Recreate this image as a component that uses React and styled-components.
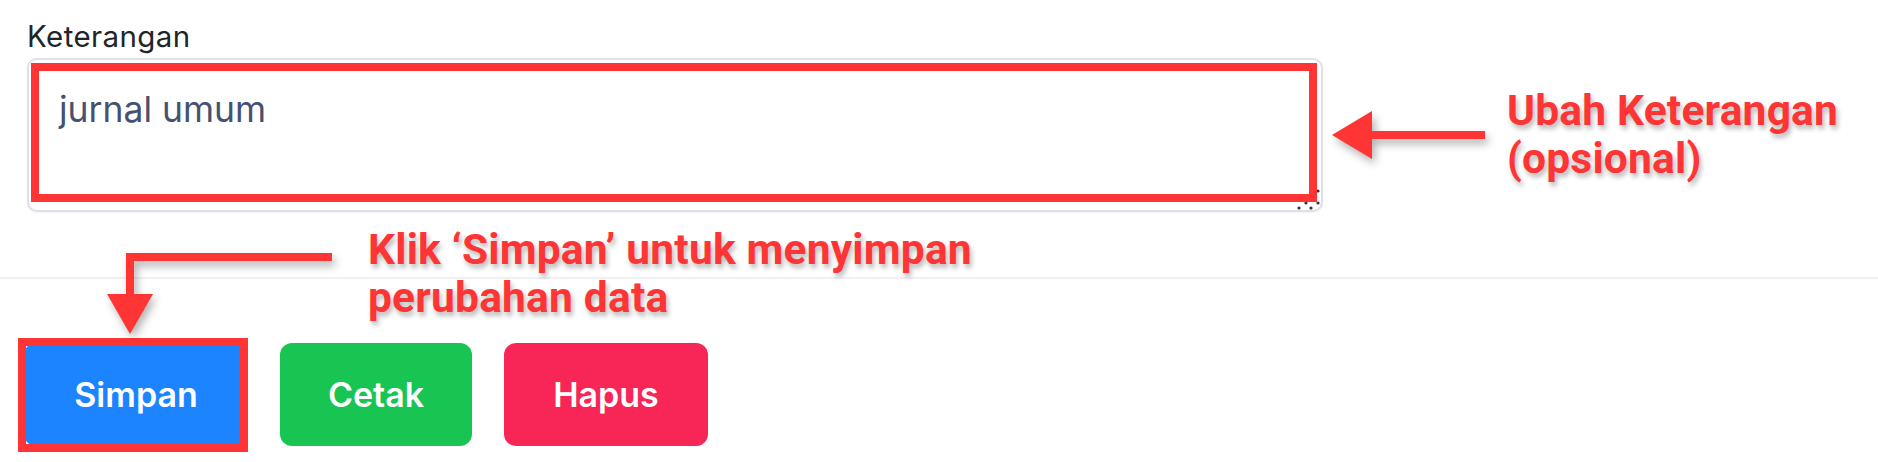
import React from "react";
import styled, { createGlobalStyle } from "styled-components";

const RED = "#ff3535";

const GlobalStyle = createGlobalStyle`
  html, body {
    margin: 0;
    padding: 0;
    background: #fff;
  }
  body {
    font-family: Inter, "Noto Sans", sans-serif;
  }
`;

const Page = styled.div`
  position: relative;
  width: 1878px;
  height: 462px;
  overflow: hidden;
  background: #fff;
`;

const FormSection = styled.section`
  padding: 19px 0 65px 27px;
  border-bottom: 2px solid #f1f1f3;
`;

const Label = styled.label`
  display: block;
  font-size: 29.5px;
  line-height: 34px;
  letter-spacing: 0.4px;
  color: #212429;
`;

const FieldRow = styled.div`
  display: flex;
  align-items: center;
  margin-top: 5px;
`;

const TextBox = styled.div`
  position: relative;
  width: 1296px;
  height: 154px;
  flex: none;
`;

const TextArea = styled.textarea`
  display: block;
  width: 100%;
  height: 100%;
  box-sizing: border-box;
  margin: 0;
  padding: 23px 30px;
  border: 2px solid #dde1ea;
  border-radius: 10px;
  box-shadow: 0 1px 2px rgba(30, 40, 70, 0.06);
  font-family: Inter, "Noto Sans", sans-serif;
  font-size: 35.5px;
  line-height: 1.5;
  color: #465170;
  resize: none;
  outline: none;
  background: #fff;
`;

const Grip = styled.svg`
  position: absolute;
  right: 0;
  bottom: 0;
`;

// red annotation frame drawn over a control
const Highlight = styled.span`
  position: absolute;
  inset: ${(p) => p.$inset};
  border: 8px solid ${RED};
  pointer-events: none;
`;

const SideNote = styled.div`
  display: flex;
  align-items: center;
  gap: 22px;
  margin-left: 9px;
`;

const NoteText = styled.div`
  font-family: Roboto, "Liberation Sans", sans-serif;
  font-weight: 700;
  font-size: 42.5px;
  line-height: 48px;
  letter-spacing: 0.2px;
  color: ${RED};
  white-space: nowrap;
  text-shadow: 2px 4px 5px rgba(0, 0, 0, 0.28);
`;

const ArrowSvg = styled.svg`
  display: block;
  flex: none;
  filter: drop-shadow(3px 5px 4px rgba(0, 0, 0, 0.3));
`;

const ActionBar = styled.div`
  display: flex;
  gap: 32px;
  padding: 64px 0 0 24px;
`;

const Slot = styled.div`
  position: relative;
`;

const Button = styled.button`
  display: flex;
  align-items: center;
  justify-content: center;
  width: ${(p) => p.$w}px;
  height: 103px;
  border: none;
  border-radius: 12px;
  background: ${(p) => p.$bg};
  color: #fff;
  font-family: Inter, "Noto Sans", sans-serif;
  font-weight: 600;
  font-size: 34px;
  padding: 0;
`;

const SaveNote = styled.div`
  position: absolute;
  top: 226px;
  left: 106px;
  display: flex;
  align-items: flex-start;
  gap: 32px;
`;

const ElbowSvg = styled(ArrowSvg)`
  margin-top: 24px;
`;

const gripDots = [
  [25, 9],
  [25, 21],
  [18, 15],
  [13, 21],
  [18, 26],
  [6, 26],
];

export default function App() {
  return (
    <Page>
      <GlobalStyle />
      <FormSection>
        <Label>Keterangan</Label>
        <FieldRow>
          <TextBox>
            <TextArea readOnly value="jurnal umum" />
            <Grip width="30" height="30" viewBox="0 0 30 30">
              {gripDots.map(([x, y]) => (
                <circle key={x + "-" + y} cx={x} cy={y} r="1.6" fill="#333" />
              ))}
            </Grip>
            <Highlight $inset="5px 6px 10px 4px" />
          </TextBox>
          <SideNote>
            <ArrowSvg width="153" height="56" viewBox="0 0 153 56">
              <polygon points="0,28 40,4 40,52" fill={RED} />
              <rect x="38" y="24" width="115" height="8" fill={RED} />
            </ArrowSvg>
            <NoteText>
              Ubah Keterangan
              <br />
              (opsional)
            </NoteText>
          </SideNote>
        </FieldRow>
      </FormSection>

      <ActionBar>
        <Slot>
          <Button $w={224} $bg="#1c84ff">
            Simpan
          </Button>
          <Highlight $inset="-5px 0 -6px -6px" />
        </Slot>
        <Button $w={192} $bg="#18c553">
          Cetak
        </Button>
        <Button $w={204} $bg="#f72657">
          Hapus
        </Button>
      </ActionBar>

      <SaveNote>
        <ElbowSvg width="230" height="86" viewBox="0 0 230 86">
          <path
            d="M226 7 H24 V46"
            fill="none"
            stroke={RED}
            strokeWidth="8"
            strokeLinejoin="miter"
          />
          <polygon points="1,44 47,44 24,84" fill={RED} />
        </ElbowSvg>
        <NoteText>
          Klik ‘Simpan’ untuk menyimpan
          <br />
          perubahan data
        </NoteText>
      </SaveNote>
    </Page>
  );
}
